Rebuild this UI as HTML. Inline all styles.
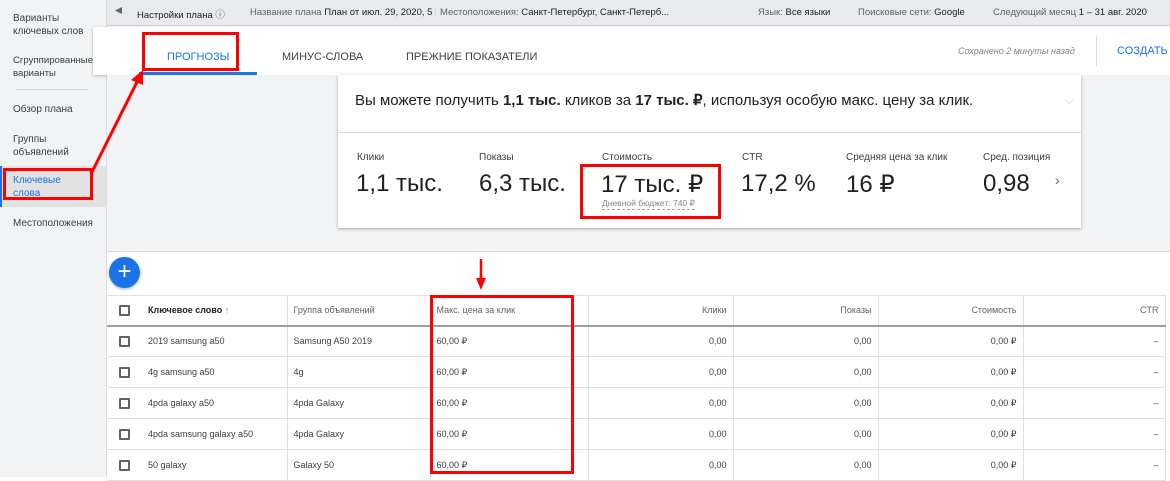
<!DOCTYPE html>
<html><head><meta charset="utf-8"><style>
*{margin:0;padding:0;box-sizing:border-box}
body{width:1170px;height:477px;overflow:hidden;position:relative;font-family:"Liberation Sans",sans-serif;color:#202124;background:#fff}
.abs{position:absolute}
.side{left:0;top:0;width:107px;height:477px;background:#f1f3f4;border-right:1px solid #dadce0}
.side div{position:absolute;left:13px;font-size:10px;line-height:13px;color:#3c4043;white-space:nowrap}
.top{left:107px;top:0;width:1063px;height:26px;background:#e8eaed;border-bottom:1px solid #d0d0d0;font-size:9.5px;color:#5f6368;white-space:nowrap}
.top span{position:absolute;top:7px;overflow:hidden}
.top b{font-weight:normal;color:#202124}
.tabs{left:93px;top:27px;width:1077px;height:48px;background:#fff;box-shadow:0 1px 3px rgba(0,0,0,.25)}
.tab{position:absolute;top:24px;font-size:11px;color:#3c4043;white-space:nowrap}
.gray{left:107px;top:75px;width:1063px;height:177px;background:#f1f3f4;border-bottom:1px solid #dadce0}
.card{left:338px;top:75px;width:743px;height:153px;background:#fff;box-shadow:0 1px 3px rgba(0,0,0,.3)}
.lbl{position:absolute;top:77px;font-size:10px;color:#3c4043}
.val{position:absolute;top:95px;font-size:24px;color:#202124}
table{position:absolute;left:107px;top:295px;border-collapse:collapse;font-size:9px;color:#3c4043}
td{height:31px;border:1px solid #e0e0e0;padding:0 6px;white-space:nowrap}
thead td{height:30px;border-bottom:2px solid #9e9e9e;color:#5f6368}
.r{text-align:right}
.cb{display:inline-block;width:11px;height:11px;border:2px solid #5f6368;border-radius:1px;vertical-align:middle}
.red{position:absolute;border:3px solid #f00}
</style></head><body>
<div class="abs side">
<div style="top:12px">Варианты<br>ключевых слов</div>
<div style="top:54px;font-size:9.6px">Сгруппированные<br>варианты</div>
<div class="abs" style="left:16px;top:89px;width:72px;height:1px;background:#dadce0"></div>
<div style="top:103px">Обзор плана</div>
<div style="top:133px">Группы<br>объявлений</div>
<div class="abs" style="left:0;top:166px;width:106px;height:41px;background:#e2e2e2;border-left:2px solid #1a73e8"></div>
<div style="top:174px;color:#1a73e8">Ключевые<br>слова</div>
<div style="top:217px">Местоположения</div>
</div>
<div class="abs top">
<span style="left:8px;top:5px;color:#5f6368">◀</span>
<span style="left:30px"><b>Настройки плана</b> ⓘ</span>
<span style="left:143px;width:186px">Название плана <b>План от июл. 29, 2020, 5 PM (G...</b></span>
<span style="left:333px">Местоположения: <b>Санкт-Петербург, Санкт-Петерб...</b></span>
<span style="left:651px">Язык: <b>Все языки</b></span>
<span style="left:751px">Поисковые сети: <b>Google</b></span>
<span style="left:886px">Следующий месяц <b>1 – 31 авг. 2020</b></span>
</div>
<div class="abs tabs">
<div class="tab" style="left:74px;color:#1a73e8">ПРОГНОЗЫ</div>
<div class="abs" style="left:46px;top:45px;width:118px;height:3px;background:#1a73e8"></div>
<div class="tab" style="left:189px">МИНУС-СЛОВА</div>
<div class="tab" style="left:313px">ПРЕЖНИЕ ПОКАЗАТЕЛИ</div>
<div class="abs" style="left:865px;top:19px;font-size:9px;font-style:italic;color:#80868b;white-space:nowrap">Сохранено 2 минуты назад</div>
<div class="abs" style="left:1003px;top:9px;width:1px;height:30px;background:#dadce0"></div>
<div class="tab" style="left:1024px;top:18px;color:#1a73e8">СОЗДАТЬ I</div>
</div>
<div class="abs gray"></div>
<div class="abs card">
<div class="abs" style="left:17px;top:16px;font-size:15px;white-space:nowrap">Вы можете получить <b>1,1 тыс.</b> кликов за <b>17 тыс. ₽</b>, используя особую макс. цену за клик.</div>
<div class="abs" style="left:727px;top:20px;color:#bbb;font-size:11px">⌵</div>
<div class="abs" style="left:0;top:57px;width:743px;height:1px;background:#dadce0"></div>
<div class="lbl" style="left:19px">Клики</div><div class="val" style="left:18px">1,1 тыс.</div>
<div class="lbl" style="left:141px">Показы</div><div class="val" style="left:141px">6,3 тыс.</div>
<div class="lbl" style="left:264px">Стоимость</div><div class="val" style="left:263px">17 тыс. ₽</div>
<div class="abs" style="left:264px;top:123px;font-size:8.5px;color:#80868b;border-bottom:1px dashed #aaa">Дневной бюджет: 740 ₽</div>
<div class="lbl" style="left:404px">CTR</div><div class="val" style="left:403px">17,2 %</div>
<div class="lbl" style="left:508px">Средняя цена за клик</div><div class="val" style="left:508px">16 ₽</div>
<div class="lbl" style="left:645px">Сред. позиция</div><div class="val" style="left:645px">0,98</div>
<div class="abs" style="left:717px;top:97px;font-size:14px;color:#5f6368">›</div>
</div>
<div class="abs" style="left:109px;top:257px;width:31px;height:31px;border-radius:50%;background:#1a73e8;color:#fff;font-size:24px;line-height:29px;text-align:center;box-shadow:0 1px 3px rgba(0,0,0,.35)">+</div>
<table>
<colgroup><col style="width:35px"><col style="width:145px"><col style="width:143px"><col style="width:158px"><col style="width:145px"><col style="width:145px"><col style="width:145px"><col style="width:142px"></colgroup>
<thead><tr><td style="border-left:none;border-right:none;text-align:center"><span class="cb"></span></td><td style="border-left:none;color:#202124;font-weight:bold">Ключевое слово <span style="color:#888">↑</span></td><td>Группа объявлений</td><td>Макс. цена за клик</td><td class="r">Клики</td><td class="r">Показы</td><td class="r">Стоимость</td><td class="r">CTR</td></tr></thead>
<tbody>
<tr><td style="border-left:none;border-right:none;text-align:center"><span class="cb"></span></td><td style="border-left:none">2019 samsung a50</td><td>Samsung A50 2019</td><td>60,00 ₽</td><td class="r">0,00</td><td class="r">0,00</td><td class="r">0,00 ₽</td><td class="r">–</td></tr>
<tr><td style="border-left:none;border-right:none;text-align:center"><span class="cb"></span></td><td style="border-left:none">4g samsung a50</td><td>4g</td><td>60,00 ₽</td><td class="r">0,00</td><td class="r">0,00</td><td class="r">0,00 ₽</td><td class="r">–</td></tr>
<tr><td style="border-left:none;border-right:none;text-align:center"><span class="cb"></span></td><td style="border-left:none">4pda galaxy a50</td><td>4pda Galaxy</td><td>60,00 ₽</td><td class="r">0,00</td><td class="r">0,00</td><td class="r">0,00 ₽</td><td class="r">–</td></tr>
<tr><td style="border-left:none;border-right:none;text-align:center"><span class="cb"></span></td><td style="border-left:none">4pda samsung galaxy a50</td><td>4pda Galaxy</td><td>60,00 ₽</td><td class="r">0,00</td><td class="r">0,00</td><td class="r">0,00 ₽</td><td class="r">–</td></tr>
<tr><td style="border-left:none;border-right:none;text-align:center"><span class="cb"></span></td><td style="border-left:none">50 galaxy</td><td>Galaxy 50</td><td>60,00 ₽</td><td class="r">0,00</td><td class="r">0,00</td><td class="r">0,00 ₽</td><td class="r">–</td></tr>
</tbody></table>
<div class="red" style="left:142px;top:32px;width:97px;height:39px"></div>
<div class="red" style="left:3px;top:168px;width:90px;height:32px"></div>
<div class="red" style="left:580px;top:164px;width:141px;height:55px"></div>
<div class="red" style="left:430px;top:295px;width:144px;height:179px"></div>
<svg class="abs" style="left:0;top:0" width="1170" height="477">
<line x1="92" y1="172" x2="138" y2="80" stroke="#f00" stroke-width="3"/>
<polygon points="143,70 131,80 143,85" fill="#f00"/>
<line x1="481" y1="259" x2="481" y2="280" stroke="#f00" stroke-width="2.5"/>
<polygon points="476,278 486,278 481,290" fill="#f00"/>
</svg>
</body></html>
